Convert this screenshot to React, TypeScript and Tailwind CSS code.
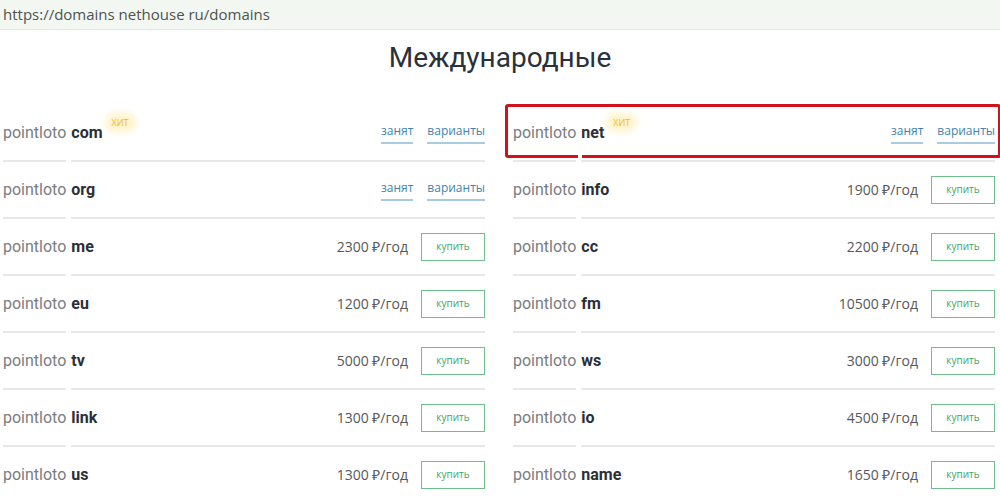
import React from 'react';

type Domain = { tld: string; hit?: boolean; taken?: boolean; price?: number; marked?: boolean };

const left: Domain[] = [
    { tld: 'com', hit: true, taken: true },
    { tld: 'org', taken: true },
    { tld: 'me', price: 2300 },
    { tld: 'eu', price: 1200 },
    { tld: 'tv', price: 5000 },
    { tld: 'link', price: 1300 },
    { tld: 'us', price: 1300 },
];

const right: Domain[] = [
    { tld: 'net', hit: true, taken: true, marked: true },
    { tld: 'info', price: 1900 },
    { tld: 'cc', price: 2200 },
    { tld: 'fm', price: 10500 },
    { tld: 'ws', price: 3000 },
    { tld: 'io', price: 4500 },
    { tld: 'name', price: 1650 },
];

const DomainRow: React.FC<{ item: Domain }> = ({ item }) => {
    return (
        <div className="relative flex h-[57px] gap-[5px]">
            {/* name */}
            <div className="flex items-center border-b-2 border-[#e6e8ea] font-['Roboto',sans-serif] text-[16px] text-[#7a7d80]">
                pointloto
            </div>
            {/* tld + actions */}
            <div className="flex flex-1 items-center border-b-2 border-[#e6e8ea]">
                <span className="font-['Roboto',sans-serif] text-[16px] font-bold text-[#2b2f36]">{item.tld}</span>
                {item.hit && (
                    <span className="-mt-[20px] ml-[6px] rounded-full bg-[#fff4cc] px-[3px] font-['Open_Sans',sans-serif] text-[9px] leading-[11px] text-[#f0b92c] shadow-[0_0_6px_5px_#fff6d6]">
                        ХИТ
                    </span>
                )}
                <div className="flex-1" />
                {item.taken ? (
                    <div className="flex items-center gap-[14px] pt-[2px] font-['Open_Sans',sans-serif] text-[12px] text-[#3f84ad]">
                        <span className="border-b-2 border-[#a9cbe0] pb-[3px] leading-[16px]">занят</span>
                        <span className="border-b-2 border-[#a9cbe0] pb-[3px] leading-[16px]">варианты</span>
                    </div>
                ) : (
                    <div className="flex items-center gap-[13px]">
                        <span className="font-['Open_Sans',sans-serif] text-[14px] text-[#55585c]">{item.price} ₽/год</span>
                        <button className="h-[28px] w-[64px] border border-[#6fbf8c] font-['Open_Sans',sans-serif] text-[10px] text-[#3fa464]">
                            купить
                        </button>
                    </div>
                )}
            </div>
            {item.marked && (
                <>
                    <div className="pointer-events-none absolute left-[-8px] right-[-6px] top-[-1px] h-[54px] rounded-[3px] border-[3px] border-[#d2111b]" />
                    <div className="absolute left-[65px] top-[50px] h-[3px] w-[4px] bg-white" />
                </>
            )}
        </div>
    );
};

export default function App() {
    return (
        <div className="h-[496px] w-[1000px] overflow-hidden bg-white">
            {/* Address bar */}
            <div className="flex h-[30px] items-center border-b border-[#e1e7e1] bg-[#f3f7f2] pl-[3px] font-['Open_Sans',sans-serif] text-[15px] text-[#4d5350]">
                https://domains nethouse ru/domains
            </div>

            {/* Title */}
            <div className="h-[75px] pt-[10px] text-center font-['Roboto',sans-serif] text-[28px] leading-[36px] text-[#2a313b]">
                Международные
            </div>

            {/* Domain columns */}
            <div className="grid grid-cols-2 gap-x-[28px] pl-[3px] pr-[5px]">
                <div>
                    {left.map((d) => (
                        <DomainRow key={d.tld} item={d} />
                    ))}
                </div>
                <div>
                    {right.map((d) => (
                        <DomainRow key={d.tld} item={d} />
                    ))}
                </div>
            </div>
        </div>
    );
}
